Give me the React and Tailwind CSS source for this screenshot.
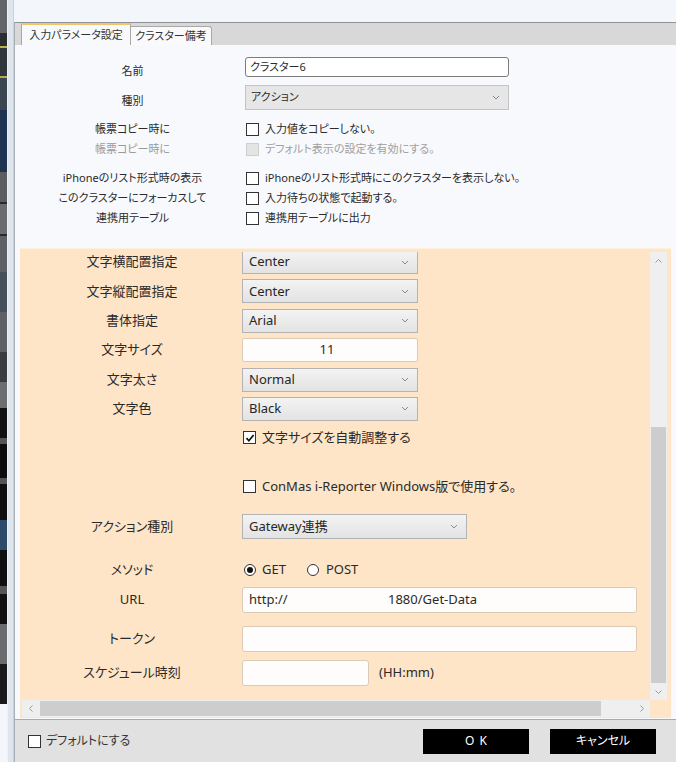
import React from "react";

const Chevron = () => (
  <svg width="8" height="5" viewBox="0 0 8 5" className="shrink-0">
    <path d="M1 1l3 3 3-3" fill="none" stroke="#8a8a8a" strokeWidth="1" />
  </svg>
);

function Box({ checked = false, disabled = false }) {
  return (
    <span
      className={
        disabled
          ? "w-[13px] h-[13px] shrink-0 border border-[#cfcfcf] bg-[#e4e4e4]"
          : "w-[13px] h-[13px] shrink-0 border border-[#333333] bg-white flex items-center justify-center"
      }
    >
      {checked && (
        <svg width="10" height="10" viewBox="0 0 10 10">
          <path d="M1.5 5.2l2.4 2.6L8.6 2" fill="none" stroke="#111" strokeWidth="1.7" />
        </svg>
      )}
    </span>
  );
}

function Radio({ on = false }) {
  return (
    <span className="w-[12px] h-[12px] rounded-full border border-[#333333] bg-white flex items-center justify-center shrink-0">
      {on && <span className="w-[6px] h-[6px] rounded-full bg-[#111]" />}
    </span>
  );
}

function PSelect({ value, wide = false }) {
  return (
    <div
      className={
        (wide ? "w-[225px] h-[25px] " : "w-[176px] h-[24px] ") +
        "flex items-center justify-between pl-[6px] pr-[8px] border border-[#b3b3b3] bg-gradient-to-b from-[#f3f3f3] to-[#e3e3e3] text-[13px] text-[#262626]"
      }
    >
      <span>{value}</span>
      <Chevron />
    </div>
  );
}

function PRow({ label, children, className = "" }) {
  return (
    <div className={"flex items-center " + className}>
      <div className="w-[220px] text-center text-[13px] text-[#2a2a2a] shrink-0">{label}</div>
      {children}
    </div>
  );
}

function TopCheckRow({ label, text, disabled = false }) {
  return (
    <div className="flex items-center h-[20px]">
      <div
        className={
          disabled
            ? "w-[225px] text-center text-[11px] text-[#9a9a9a] shrink-0"
            : "w-[225px] text-center text-[11px] text-[#2a2a2a] shrink-0"
        }
      >
        {label}
      </div>
      <div className="flex items-center gap-[6px] ml-[1px]">
        <Box disabled={disabled} />
        <span className={disabled ? "text-[11px] text-[#a0a0a0]" : "text-[11px] text-[#2a2a2a]"}>{text}</span>
      </div>
    </div>
  );
}

const strip = [
  "h-[33px] bg-[#62656a]",
  "h-[13px] bg-[#2b2d31]",
  "h-[2px] bg-[#bcae50]",
  "h-[28px] bg-[#31353c]",
  "h-[2px] bg-[#b5a94e]",
  "h-[32px] bg-[#3c4552]",
  "h-[62px] bg-[#1f3452]",
  "h-[30px] bg-[#5b5d60]",
  "h-[2px] bg-[#2a2a2a]",
  "h-[30px] bg-[#6a6c6f]",
  "h-[2px] bg-[#2a2a2a]",
  "h-[36px] bg-[#5d6064]",
  "h-[40px] bg-[#46505c]",
  "h-[40px] bg-[#5f6165]",
  "h-[30px] bg-[#3a3c40]",
  "h-[26px] bg-[#6c6e71]",
  "h-[30px] bg-[#121212]",
  "h-[6px] bg-[#555]",
  "h-[34px] bg-[#0d0d0d]",
  "h-[6px] bg-[#555]",
  "h-[36px] bg-[#101010]",
  "h-[30px] bg-[#2d4a6a]",
  "h-[36px] bg-[#0f0f0f]",
  "h-[8px] bg-[#555]",
  "h-[30px] bg-[#111]",
  "h-[40px] bg-[#6a6c6f]",
  "h-[40px] bg-[#1a1a1a]",
];

export default function App() {
  return (
    <div className="w-[676px] h-[762px] overflow-hidden flex bg-[#f3f6fa] font-['Noto_Sans','Noto_Sans_CJK_JP',sans-serif] [font-feature-settings:'palt'] text-[#2a2a2a]">
      {/* background app strip */}
      <div className="w-[7px] shrink-0 flex flex-col">
        {strip.map((c, i) => (
          <div key={i} className={c + " shrink-0"} />
        ))}
      </div>
      {/* window frame */}
      <div className="w-[7px] shrink-0 bg-[#dfe5ec] border-l border-[#eef2f6] border-r border-r-[#c9d0d8]" />

      <div className="w-[662px] shrink-0 flex flex-col">
        <div className="h-[22px] shrink-0 bg-[#f3f6fa]" />
        <div className="flex-1 flex flex-col border-l border-[#aab0b7] min-h-0">
          {/* tab strip */}
          <div className="h-[23px] shrink-0 border-t border-[#8f9396] bg-[#d8d8d8] flex items-end pl-[6px]">
            <div className="h-[22px] w-[110px] bg-[#f8f9fc] border-t-2 border-[#f2c46e] border-x border-x-[#a8a8a8] flex items-center justify-center text-[11px] text-[#333]">
              入力パラメータ設定
            </div>
            <div className="h-[19px] w-[81px] bg-[#fafafa] border-t border-r border-[#a8a8a8] rounded-tr-[3px] flex items-center justify-center text-[11px] text-[#333]">
              クラスター備考
            </div>
          </div>

          {/* content */}
          <div className="flex-1 bg-[#f8f9fd] flex flex-col pl-[5px] pr-[5px] pt-[12px] min-h-0">
            {/* top form */}
            <div className="flex items-start h-[20px] shrink-0">
              <div className="w-[225px] text-center text-[11px] leading-[14px] mt-[7px] shrink-0">名前</div>
              <div className="w-[264px] h-[20px] bg-white border border-[#7c7c7c] rounded-[3px] flex items-center pl-[4px] text-[11px]">
                クラスター6
              </div>
            </div>
            <div className="flex items-start h-[25px] mt-[8px] shrink-0">
              <div className="w-[225px] text-center text-[11px] leading-[14px] mt-[9px] shrink-0">種別</div>
              <div className="w-[264px] h-[25px] bg-[#e6e6e6] border border-[#c4c4c4] flex items-center justify-between pl-[5px] pr-[8px] text-[11px]">
                <span>アクション</span>
                <Chevron />
              </div>
            </div>
            <div className="mt-[9px] shrink-0">
              <TopCheckRow label="帳票コピー時に" text="入力値をコピーしない。" />
              <TopCheckRow label="帳票コピー時に" text="デフォルト表示の設定を有効にする。" disabled />
            </div>
            <div className="mt-[9px] shrink-0">
              <TopCheckRow label="iPhoneのリスト形式時の表示" text="iPhoneのリスト形式時にこのクラスターを表示しない。" />
              <TopCheckRow label="このクラスターにフォーカスして" text="入力待ちの状態で起動する。" />
              <TopCheckRow label="連携用テーブル" text="連携用テーブルに出力" />
            </div>

            {/* orange panel */}
            <div className="mt-[20px] h-[470px] shrink-0 bg-[#ffe5c7] border-t border-[#fff0dd] flex flex-col pt-[3px]">
              <div className="h-[448px] flex">
                <div className="w-[630px] pl-[2px] overflow-hidden">
                  <div className="flex flex-col mt-[-2px]">
                    <div className="flex flex-col gap-[5.4px]">
                      <PRow label="文字横配置指定" className="h-[24px]"><PSelect value="Center" /></PRow>
                      <PRow label="文字縦配置指定" className="h-[24px]"><PSelect value="Center" /></PRow>
                      <PRow label="書体指定" className="h-[24px]"><PSelect value="Arial" /></PRow>
                      <PRow label="文字サイズ" className="h-[24px]">
                        <div className="w-[176px] h-[24px] bg-[#fffdfb] border border-[#d9cbb8] rounded-[2px] flex items-center justify-center text-[13px] pr-[6px]">
                          11
                        </div>
                      </PRow>
                      <PRow label="文字太さ" className="h-[24px]"><PSelect value="Normal" /></PRow>
                      <PRow label="文字色" className="h-[24px]"><PSelect value="Black" /></PRow>
                    </div>
                    <PRow label="" className="h-[20px] mt-[7px]">
                      <div className="flex items-center gap-[6px] ml-[1px]">
                        <Box checked />
                        <span className="text-[13px]">文字サイズを自動調整する</span>
                      </div>
                    </PRow>
                    <PRow label="" className="h-[20px] mt-[29px]">
                      <div className="flex items-center gap-[6px] ml-[1px]">
                        <Box />
                        <span className="text-[13px]">ConMas i-Reporter Windows版で使用する。</span>
                      </div>
                    </PRow>
                    <PRow label="アクション種別" className="h-[25px] mt-[17px]">
                      <PSelect value="Gateway連携" wide />
                    </PRow>
                    <PRow label="メソッド" className="h-[20px] mt-[21px]">
                      <div className="flex items-center ml-[2px] text-[13px]">
                        <Radio on />
                        <span className="ml-[6px]">GET</span>
                        <span className="ml-[21px]"><Radio /></span>
                        <span className="ml-[7px]">POST</span>
                      </div>
                    </PRow>
                    <PRow label="URL" className="h-[26px] mt-[7px]">
                      <div className="w-[395px] h-[26px] bg-[#fffdfb] border border-[#d9cbb8] rounded-[3px] flex items-center pl-[6px] text-[13px]">
                        <span className="w-[139px] shrink-0">http://</span>
                        <span>1880/Get-Data</span>
                      </div>
                    </PRow>
                    <PRow label="トークン" className="h-[26px] mt-[13px]">
                      <div className="w-[395px] h-[26px] bg-[#fffdfb] border border-[#d9cbb8] rounded-[3px]" />
                    </PRow>
                    <PRow label="スケジュール時刻" className="h-[26px] mt-[8px]">
                      <div className="w-[127px] h-[26px] bg-[#fffdfb] border border-[#d9cbb8] rounded-[3px]" />
                      <span className="ml-[10px] text-[13px]">(HH:mm)</span>
                    </PRow>
                  </div>
                </div>
                {/* vertical scrollbar */}
                <div className="w-[17px] bg-[#efefef] flex flex-col">
                  <div className="h-[17px] flex items-center justify-center">
                    <svg width="7" height="4" viewBox="0 0 7 4"><path d="M0.5 3.5l3-3 3 3" fill="none" stroke="#9a9a9a" strokeWidth="1" /></svg>
                  </div>
                  <div className="flex-1" />
                  <div className="h-[256px] mx-[1px] bg-[#cdcdcd]" />
                  <div className="h-[17px] flex items-center justify-center">
                    <svg width="7" height="4" viewBox="0 0 7 4"><path d="M0.5 0.5l3 3 3-3" fill="none" stroke="#9a9a9a" strokeWidth="1" /></svg>
                  </div>
                </div>
              </div>
              {/* horizontal scrollbar */}
              <div className="h-[17px] flex pl-[2px]">
                <div className="w-[628px] bg-[#efefef] flex items-stretch">
                  <div className="w-[18px] flex items-center justify-center">
                    <svg width="4" height="7" viewBox="0 0 4 7"><path d="M3.5 0.5l-3 3 3 3" fill="none" stroke="#9a9a9a" strokeWidth="1" /></svg>
                  </div>
                  <div className="w-[561px] my-[1px] bg-[#cdcdcd]" />
                  <div className="flex-1" />
                  <div className="w-[17px] flex items-center justify-center">
                    <svg width="4" height="7" viewBox="0 0 4 7"><path d="M0.5 0.5l3 3-3 3" fill="none" stroke="#9a9a9a" strokeWidth="1" /></svg>
                  </div>
                </div>
              </div>
            </div>
          </div>

          {/* bottom bar */}
          <div className="h-[43px] shrink-0 bg-[#e1e1e1] border-t border-[#a9a9a9] flex items-center pl-[13px] pr-[20px]">
            <div className="flex items-center gap-[5px]">
              <Box />
              <span className="text-[12px] text-[#333]">デフォルトにする</span>
            </div>
            <div className="flex-1" />
            <button className="w-[106px] h-[25px] bg-black text-white text-[12px] tracking-[5px] pl-[5px] flex items-center justify-center">
              OK
            </button>
            <button className="w-[106px] h-[25px] ml-[21px] bg-black text-white text-[12px] flex items-center justify-center">
              キャンセル
            </button>
          </div>
        </div>
      </div>
    </div>
  );
}
